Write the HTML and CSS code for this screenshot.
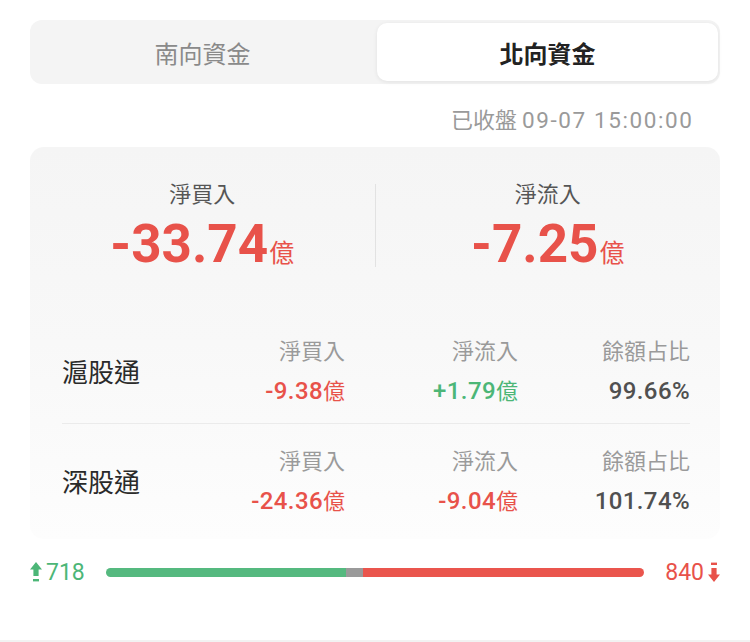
FILE: index.html
```html
<!DOCTYPE html>
<html lang="zh-Hant">
<head>
  <meta charset="UTF-8" />
  <meta name="viewport" content="width=device-width, initial-scale=1.0" />
  <title>北向資金</title>
  <link rel="stylesheet" href="styles.css">
</head>
<body>
  <div class="page">
    <div class="tabs">
      <div class="tab">南向資金</div>
      <div class="tab active">北向資金</div>
    </div>

    <div class="status">已收盤 <span class="num">09-07 15:00:00</span></div>

    <div class="card">
      <div class="summary">
        <div class="stat">
          <div class="stat-label">淨買入</div>
          <div class="stat-value"><span class="num">-33.74</span><span class="unit">億</span></div>
        </div>
        <div class="vline"></div>
        <div class="stat">
          <div class="stat-label">淨流入</div>
          <div class="stat-value"><span class="num">-7.25</span><span class="unit">億</span></div>
        </div>
      </div>

      <div class="row">
        <div class="row-name">滬股通</div>
        <div class="cell">
          <div class="cell-label">淨買入</div>
          <div class="cell-value down"><span class="num">-9.38</span>億</div>
        </div>
        <div class="cell">
          <div class="cell-label">淨流入</div>
          <div class="cell-value up"><span class="num">+1.79</span>億</div>
        </div>
        <div class="cell">
          <div class="cell-label">餘額占比</div>
          <div class="cell-value"><span class="num">99.66%</span></div>
        </div>
      </div>

      <div class="row">
        <div class="row-name">深股通</div>
        <div class="cell">
          <div class="cell-label">淨買入</div>
          <div class="cell-value down"><span class="num">-24.36</span>億</div>
        </div>
        <div class="cell">
          <div class="cell-label">淨流入</div>
          <div class="cell-value down"><span class="num">-9.04</span>億</div>
        </div>
        <div class="cell">
          <div class="cell-label">餘額占比</div>
          <div class="cell-value"><span class="num">101.74%</span></div>
        </div>
      </div>
    </div>

    <div class="breadth">
      <div class="count up">
        <svg width="12" height="20" viewBox="0 0 12 20">
          <path d="M6 0 L12 7.5 L8.6 7.5 L8.6 14 L3.4 14 L3.4 7.5 L0 7.5 Z" fill="currentColor"/>
          <rect x="3" y="17" width="6" height="2.4" fill="currentColor"/>
        </svg>
        <span class="num">718</span>
      </div>
      <div class="bar">
        <div class="bar-up" style="width: 44.6%"></div>
        <div class="bar-flat" style="width: 3.2%"></div>
        <div class="bar-down" style="width: 52.2%"></div>
      </div>
      <div class="count down">
        <span class="num">840</span>
        <svg width="12" height="20" viewBox="0 0 12 20">
          <rect x="3" y="0.6" width="6" height="2.4" fill="currentColor"/>
          <path d="M6 20 L12 12.5 L8.6 12.5 L8.6 6 L3.4 6 L3.4 12.5 L0 12.5 Z" fill="currentColor"/>
        </svg>
      </div>
    </div>

    <div class="bottom-line"></div>
  </div>
</body>
</html>
```

FILE: styles.css
```css
html, body {
  margin: 0;
  padding: 0;
  background: #fff;
  font-family: "Noto Sans CJK TC", "Noto Sans", sans-serif;
  color: #333;
}

.num {
  font-family: Roboto, "Noto Sans", sans-serif;
}

.page {
  padding: 20px 30px 0;
  overflow: hidden;
  height: 642px;
  box-sizing: border-box;
}

.tabs {
  display: grid;
  grid-template-columns: 1fr 1fr;
  gap: 4px;
  padding: 3px 2px;
  height: 64px;
  box-sizing: border-box;
  background: #f4f4f4;
  border-radius: 12px;
}

.tab {
  display: flex;
  justify-content: center;
  align-items: center;
  font-size: 24px;
  color: #8a8a8a;
  border-radius: 10px;
}

.tab.active {
  background: #fff;
  color: #222;
  font-weight: 700;
  box-shadow: 0 1px 4px rgba(0, 0, 0, 0.08);
}

.status {
  margin-top: 22px;
  height: 24px;
  line-height: 24px;
  text-align: right;
  padding-right: 28px;
  font-size: 22px;
  color: #9a9a9a;
}

.status .num {
  font-size: 22.5px;
  letter-spacing: 1.6px;
  margin-right: -1.6px;
}

.card {
  margin-top: 17px;
  padding: 30px 0 6px;
  border-radius: 14px;
  background: linear-gradient(180deg, #f5f5f5 0%, #f8f8f8 50%, #fdfdfd 100%);
}

.summary {
  display: grid;
  grid-template-columns: 1fr 1px 1fr;
  align-items: center;
  padding-bottom: 40px;
}

.vline {
  height: 83px;
  background: #e2e2e2;
}

.stat {
  text-align: center;
}

.stat-label {
  font-size: 22px;
  line-height: 30px;
  height: 30px;
  color: #555;
}

.stat-value {
  margin-top: 7px;
  height: 60px;
  line-height: 60px;
  color: #e8524a;
}

.stat-value .num {
  font-size: 53px;
  font-weight: 700;
}

.stat-value .unit {
  font-size: 25px;
  margin-left: 1px;
}

.row {
  display: grid;
  grid-template-columns: 1fr 173px 173px 172px;
  align-items: center;
  margin: 0 30px 0 32px;
  padding: 20px 0 16px;
}

.row + .row {
  border-top: 1px solid #ebebeb;
}

.row-name {
  font-size: 26px;
  line-height: 36px;
  color: #2a2a2a;
}

.cell {
  text-align: right;
}

.cell-label {
  font-size: 22px;
  line-height: 30px;
  height: 30px;
  color: #9a9a9a;
}

.cell-value {
  margin-top: 7px;
  height: 36px;
  line-height: 36px;
  font-size: 22px;
  color: #505050;
}

.cell-value .num {
  font-size: 24px;
  font-weight: 500;
  letter-spacing: 0.4px;
}

.up {
  color: #4cb677;
}

.down {
  color: #e8524a;
}

.breadth {
  display: flex;
  align-items: center;
  margin-top: 18px;
  height: 30px;
}

.count {
  display: flex;
  align-items: center;
  gap: 4px;
  font-size: 23px;
}

.bar {
  flex: 1;
  display: flex;
  height: 9px;
  margin: 0 21px;
  border-radius: 5px;
  overflow: hidden;
}

.bar-up {
  background: #55b97f;
}

.bar-flat {
  background: #9a9a9a;
}

.bar-down {
  background: #ea554d;
}

.bottom-line {
  margin: 53px -30px 0;
  height: 3px;
  background: #f2f2f2;
}
```
